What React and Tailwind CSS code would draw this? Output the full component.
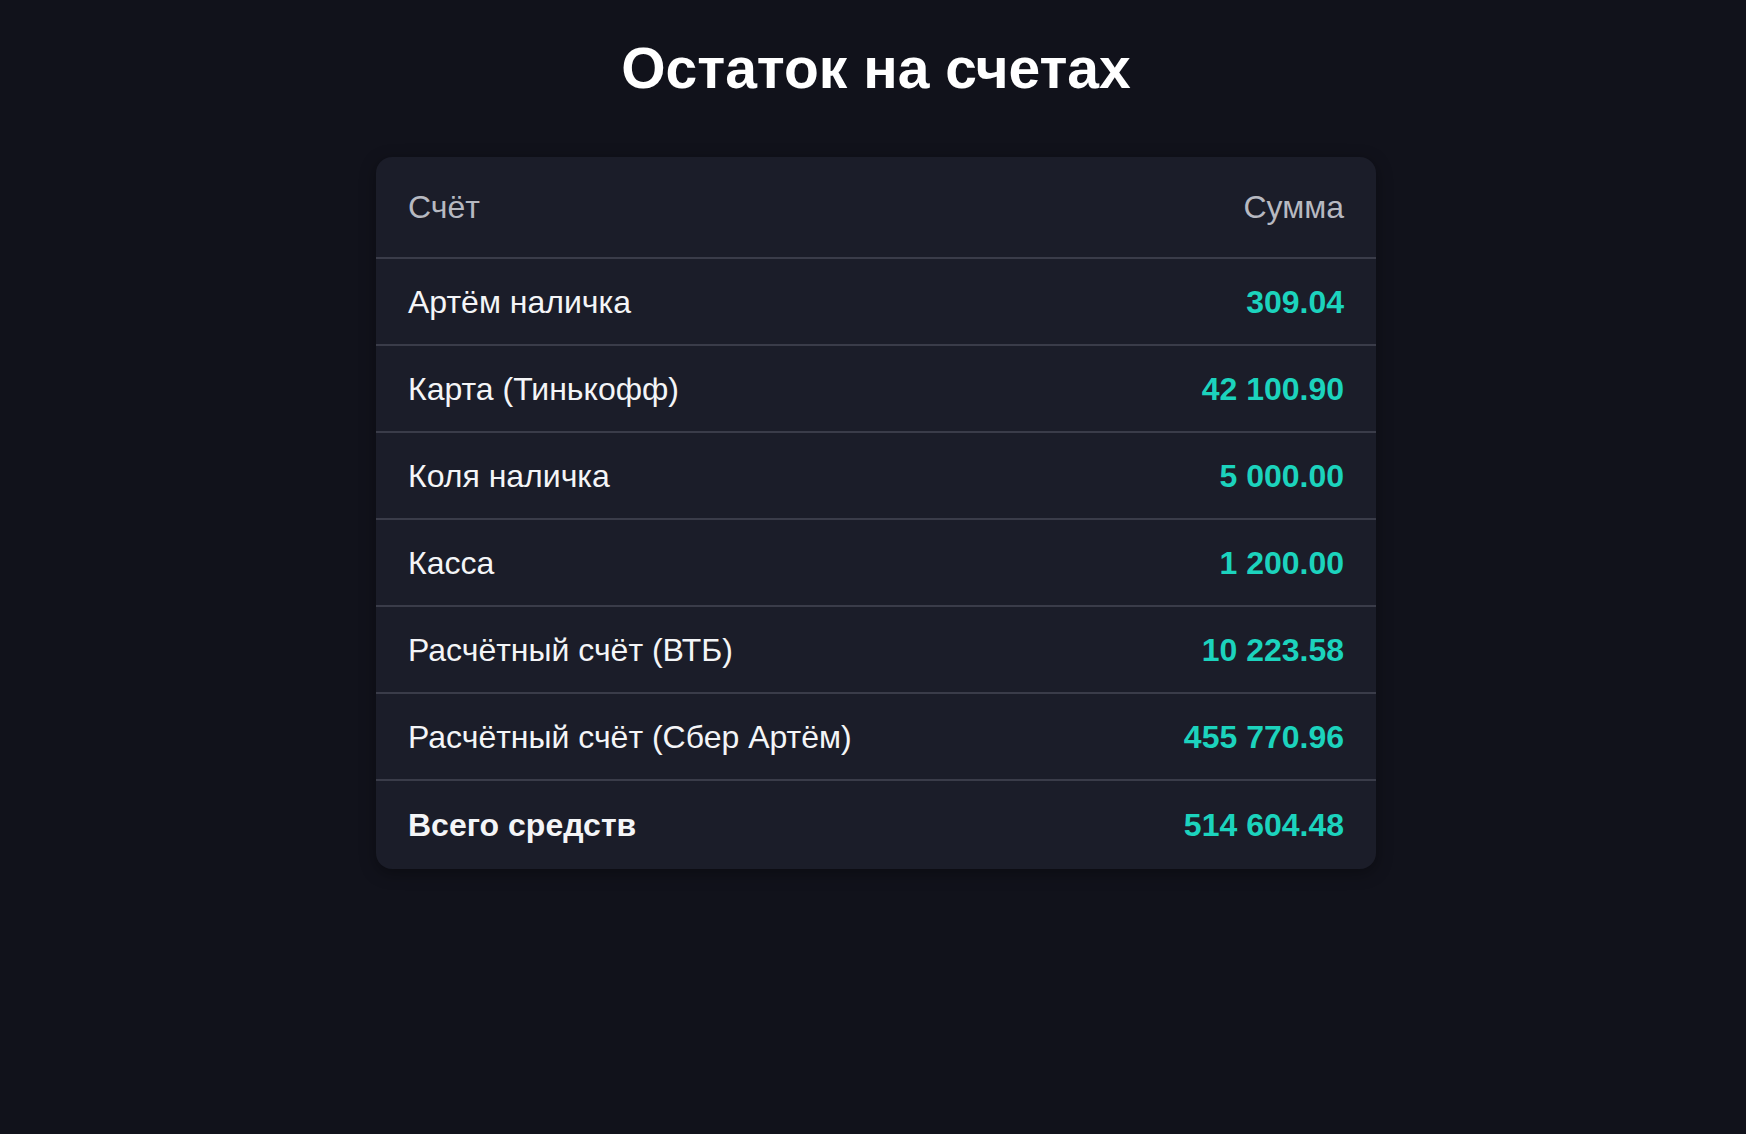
import React from "react";

const rows = [
  ["Артём наличка", "309.04"],
  ["Карта (Тинькофф)", "42 100.90"],
  ["Коля наличка", "5 000.00"],
  ["Касса", "1 200.00"],
  ["Расчётный счёт (ВТБ)", "10 223.58"],
  ["Расчётный счёт (Сбер Артём)", "455 770.96"],
];

export default function App() {
  return (
    <div
      className="min-h-[1134px] w-full bg-[#11121b] pl-[6px] pt-[40px]"
      style={{ fontFamily: '"Liberation Sans", Arial, Helvetica, sans-serif' }}
    >
      <h1 className="text-center text-[57px] font-bold leading-none text-white">
        Остаток на счетах
      </h1>
      <div className="mx-auto mt-[60px] w-[1000px] overflow-hidden rounded-2xl bg-[#1b1d29] shadow-[0_4px_16px_rgba(0,0,0,0.35)]">
        <div className="flex h-[102px] items-center justify-between border-b-2 border-[#3a3c49] px-8 text-[32px] text-[#b7b9c1]">
          <span>Счёт</span>
          <span>Сумма</span>
        </div>
        {rows.map(([name, sum]) => (
          <div
            key={name}
            className="flex h-[87px] items-center justify-between border-b-2 border-[#3a3c49] px-8 text-[32px]"
          >
            <span className="text-[#f4f5f7]">{name}</span>
            <span className="font-bold text-[#1cd3bd]">{sum}</span>
          </div>
        ))}
        <div className="flex h-[88px] items-center justify-between px-8 text-[32px] font-bold">
          <span className="text-[#f4f5f7]">Всего средств</span>
          <span className="text-[#1cd3bd]">514 604.48</span>
        </div>
      </div>
    </div>
  );
}
